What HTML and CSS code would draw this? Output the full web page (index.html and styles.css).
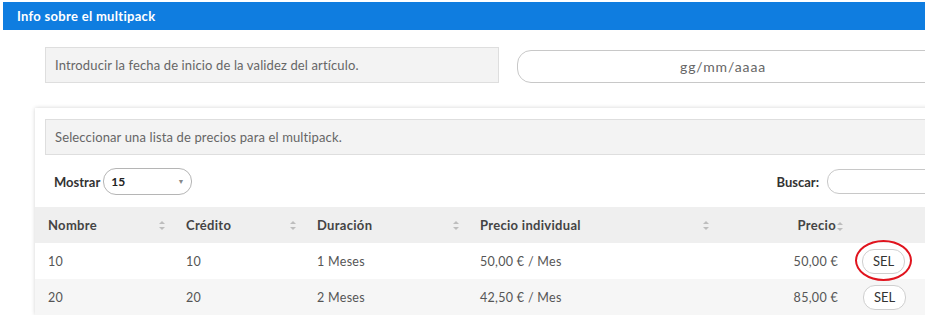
FILE: index.html
```html
<!DOCTYPE html>
<html lang="es">
<head>
<meta charset="UTF-8">
<title>Info sobre el multipack</title>
<link rel="stylesheet" href="styles.css">
</head>
<body>
<div class="page">
    <div class="header">Info sobre el multipack</div>

    <div class="date-row">
        <div class="note note-date">Introducir la fecha de inicio de la validez del artículo.</div>
        <div class="date-input">gg/mm/aaaa</div>
    </div>

    <div class="panel">
        <div class="note note-list">Seleccionar una lista de precios para el multipack.</div>

        <div class="controls">
            <label class="length">Mostrar
                <span class="select">15<span class="arrow">&#9660;</span></span>
            </label>
            <label class="search">Buscar:
                <span class="search-box"></span>
            </label>
        </div>

        <table class="prices">
            <thead>
                <tr>
                    <th class="c-name">Nombre <span class="sort"></span></th>
                    <th class="c-credit">Crédito <span class="sort"></span></th>
                    <th class="c-dur">Duración <span class="sort"></span></th>
                    <th class="c-unit">Precio individual <span class="sort"></span></th>
                    <th class="c-price">Precio<span class="sort inline"></span></th>
                    <th class="c-sel"></th>
                </tr>
            </thead>
            <tbody>
                <tr>
                    <td>10</td>
                    <td>10</td>
                    <td>1 Meses</td>
                    <td>50,00 € / Mes</td>
                    <td class="num">50,00 €</td>
                    <td class="sel-cell"><button class="sel marked">SEL</button></td>
                </tr>
                <tr>
                    <td>20</td>
                    <td>20</td>
                    <td>2 Meses</td>
                    <td>42,50 € / Mes</td>
                    <td class="num">85,00 €</td>
                    <td class="sel-cell"><button class="sel">SEL</button></td>
                </tr>
            </tbody>
        </table>
    </div>
</div>
</body>
</html>
```

FILE: styles.css
```css
body {
    margin: 0;
    background-color: #fff;
    font-family: Lato, "Open Sans", sans-serif;
    color: #555;
    overflow: hidden;
}
.page {
    width: 980px;
    padding-top: 2px;
}
.header {
    margin-left: 3px;
    height: 28px;
    line-height: 28px;
    padding-left: 14px;
    background-color: #0f7de0;
    color: #fff;
    font-size: 13px;
    font-weight: bold;
    letter-spacing: 0.3px;
}
.date-row {
    display: flex;
    align-items: flex-start;
    margin-top: 17px;
    padding-left: 45px;
}
.note {
    box-sizing: border-box;
    height: 36px;
    line-height: 34px;
    padding-left: 9px;
    background-color: #f3f3f3;
    border: 1px solid #dedede;
    color: #666;
    font-size: 13px;
    letter-spacing: 0.13px;
}
.note-date {
    width: 454px;
}
.date-input {
    box-sizing: border-box;
    margin: 3px 0 0 18px;
    width: 440px;
    height: 33px;
    line-height: 31px;
    border: 1px solid #c8c8c8;
    border-radius: 14px;
    padding-left: 162px;
    color: #666;
    font-size: 14px;
    letter-spacing: 0.9px;
}
.panel {
    margin: 25px 0 0 35px;
    padding-top: 11px;
    box-shadow: 0 0 4px rgba(0, 0, 0, 0.18);
}
.note-list {
    margin-left: 10px;
}
.controls {
    display: flex;
    justify-content: space-between;
    align-items: center;
    height: 52px;
    padding-left: 19px;
    padding-top: 1px;
    box-sizing: border-box;
}
.controls label {
    display: flex;
    align-items: center;
    color: #333;
    font-size: 13px;
    font-weight: bold;
}
.select {
    box-sizing: border-box;
    position: relative;
    margin-left: 3px;
    width: 89px;
    height: 27px;
    line-height: 25px;
    padding-left: 7px;
    border: 1px solid #b5b5b5;
    border-radius: 13px;
    font-size: 12px;
    color: #222;
}
.arrow {
    position: absolute;
    right: 7px;
    top: 0;
    font-size: 7px;
    color: #888;
}
.search-box {
    box-sizing: border-box;
    margin-left: 8px;
    width: 153px;
    height: 25px;
    border: 1px solid #c8c8c8;
    border-radius: 12px;
}
.prices {
    width: 100%;
    border-collapse: collapse;
    font-size: 12.5px;
    letter-spacing: 0.3px;
}
.prices th {
    position: relative;
    height: 36px;
    padding: 0 0 0 13px;
    text-align: left;
    background-color: #efefef;
    color: #444;
    font-size: 13px;
    font-weight: bold;
}
.prices td {
    height: 36px;
    padding: 0 0 0 13px;
    color: #555;
}
.prices tbody tr:nth-child(2) td {
    background-color: #f6f6f6;
}
.c-name { width: 125px; }
.c-credit { width: 118px; }
.c-dur { width: 150px; }
.c-unit { width: 237px; }
.c-price { width: 114px; }
.prices th.c-price,
.prices td.num {
    text-align: right;
    padding-right: 12px;
}
.prices th.c-price {
    padding-right: 6px;
}
.sort {
    position: absolute;
    right: 7px;
    top: 14px;
    width: 7px;
    height: 9px;
}
.sort::before,
.sort::after {
    content: "";
    position: absolute;
    left: 0;
    border-left: 3.5px solid transparent;
    border-right: 3.5px solid transparent;
}
.sort::before {
    top: 0;
    border-bottom: 3.5px solid #bdbdbd;
}
.sort::after {
    bottom: 0;
    border-top: 3.5px solid #bdbdbd;
}
.sort.inline {
    position: relative;
    display: inline-block;
    right: auto;
    top: 1px;
    margin-left: 1px;
}
.sel {
    width: 43px;
    height: 25px;
    background-color: #fff;
    border: 1px solid #cfcfcf;
    border-radius: 12px;
    color: #333;
    font-family: Lato, "Open Sans", sans-serif;
    font-size: 13px;
    cursor: pointer;
}
.marked {
    position: relative;
    margin-left: -1px;
}
.marked::after {
    content: "";
    box-sizing: border-box;
    position: absolute;
    left: -8px;
    top: -10px;
    width: 57px;
    height: 41px;
    border: 2px solid #e0141e;
    border-radius: 50%;
}
```
